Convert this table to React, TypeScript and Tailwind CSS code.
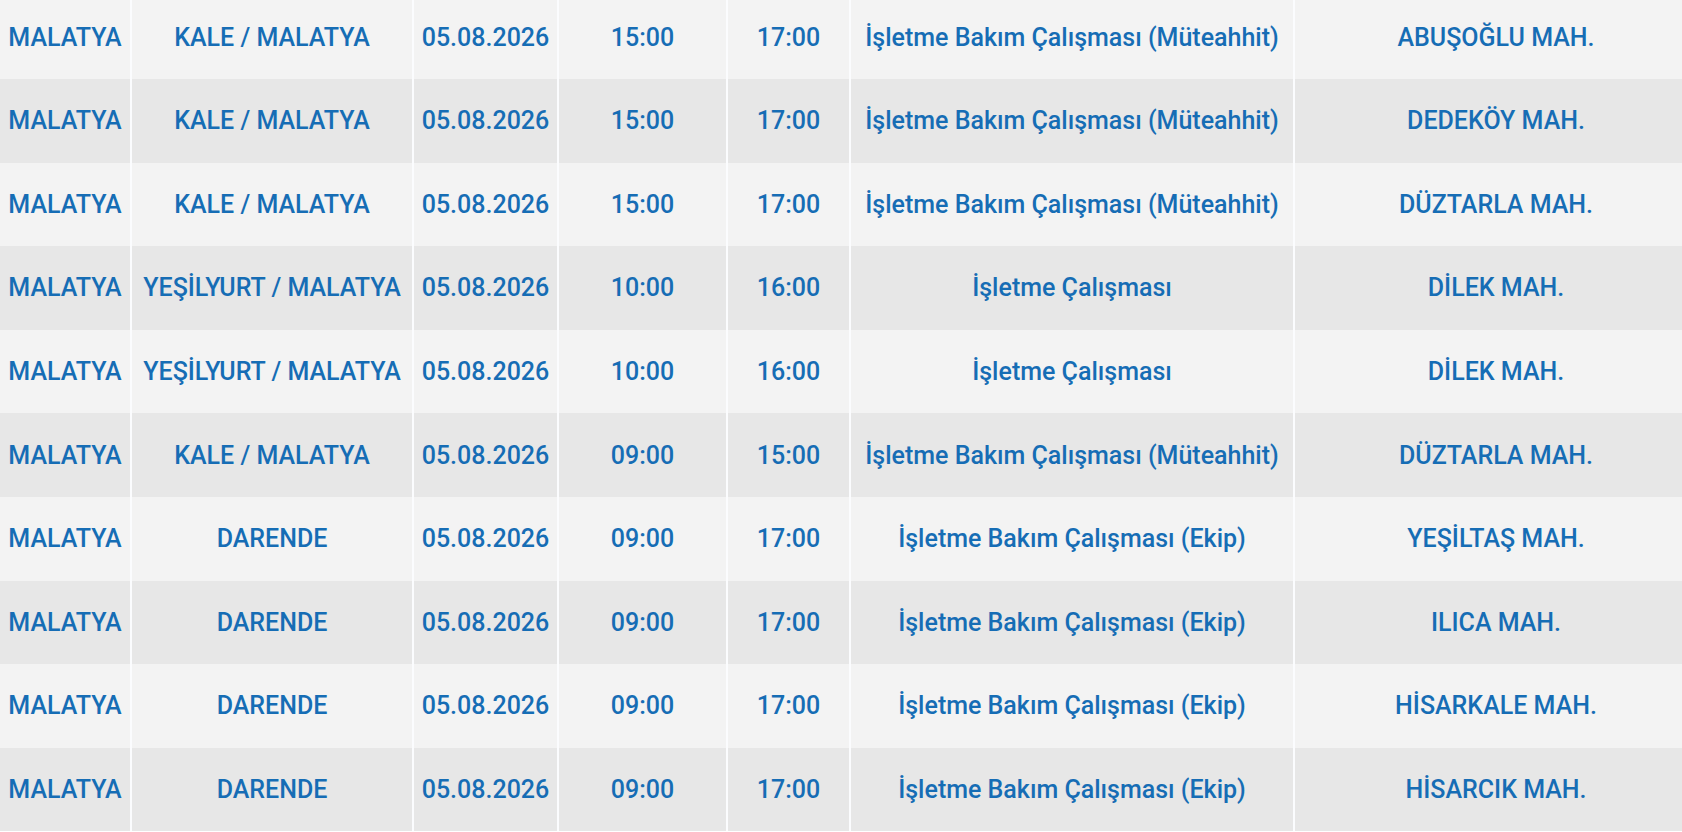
import React from "react";

const rows: string[][] = [
  ["MALATYA", "KALE / MALATYA", "05.08.2026", "15:00", "17:00", "İşletme Bakım Çalışması (Müteahhit)", "ABUŞOĞLU MAH."],
  ["MALATYA", "KALE / MALATYA", "05.08.2026", "15:00", "17:00", "İşletme Bakım Çalışması (Müteahhit)", "DEDEKÖY MAH."],
  ["MALATYA", "KALE / MALATYA", "05.08.2026", "15:00", "17:00", "İşletme Bakım Çalışması (Müteahhit)", "DÜZTARLA MAH."],
  ["MALATYA", "YEŞİLYURT / MALATYA", "05.08.2026", "10:00", "16:00", "İşletme Çalışması", "DİLEK MAH."],
  ["MALATYA", "YEŞİLYURT / MALATYA", "05.08.2026", "10:00", "16:00", "İşletme Çalışması", "DİLEK MAH."],
  ["MALATYA", "KALE / MALATYA", "05.08.2026", "09:00", "15:00", "İşletme Bakım Çalışması (Müteahhit)", "DÜZTARLA MAH."],
  ["MALATYA", "DARENDE", "05.08.2026", "09:00", "17:00", "İşletme Bakım Çalışması (Ekip)", "YEŞİLTAŞ MAH."],
  ["MALATYA", "DARENDE", "05.08.2026", "09:00", "17:00", "İşletme Bakım Çalışması (Ekip)", "ILICA MAH."],
  ["MALATYA", "DARENDE", "05.08.2026", "09:00", "17:00", "İşletme Bakım Çalışması (Ekip)", "HİSARKALE MAH."],
  ["MALATYA", "DARENDE", "05.08.2026", "09:00", "17:00", "İşletme Bakım Çalışması (Ekip)", "HİSARCIK MAH."],
];

export default function App() {
  return (
    <div
      className="w-[1682px] h-[832px] overflow-hidden bg-white"
      style={{ fontFamily: "Roboto, 'Noto Sans', sans-serif" }}
    >
      <div className="-mt-[4.6px] flex flex-col w-[1697px]">
        {rows.map((r, i) => (
          <div
            key={i}
            className="grid grid-cols-[130px_280px_143px_167px_121px_442px_402px] gap-x-[2px] bg-[#fbfcfe] h-[83.6px]"
          >
            {r.map((c, j) => (
              <div
                key={j}
                className={`flex items-center justify-center text-center text-[25px] font-medium text-[#166db5] leading-none whitespace-nowrap ${
                  i % 2 === 0 ? "bg-[#f3f3f3]" : "bg-[#e7e7e7]"
                }`}
              >
                {c}
              </div>
            ))}
          </div>
        ))}
      </div>
    </div>
  );
}
